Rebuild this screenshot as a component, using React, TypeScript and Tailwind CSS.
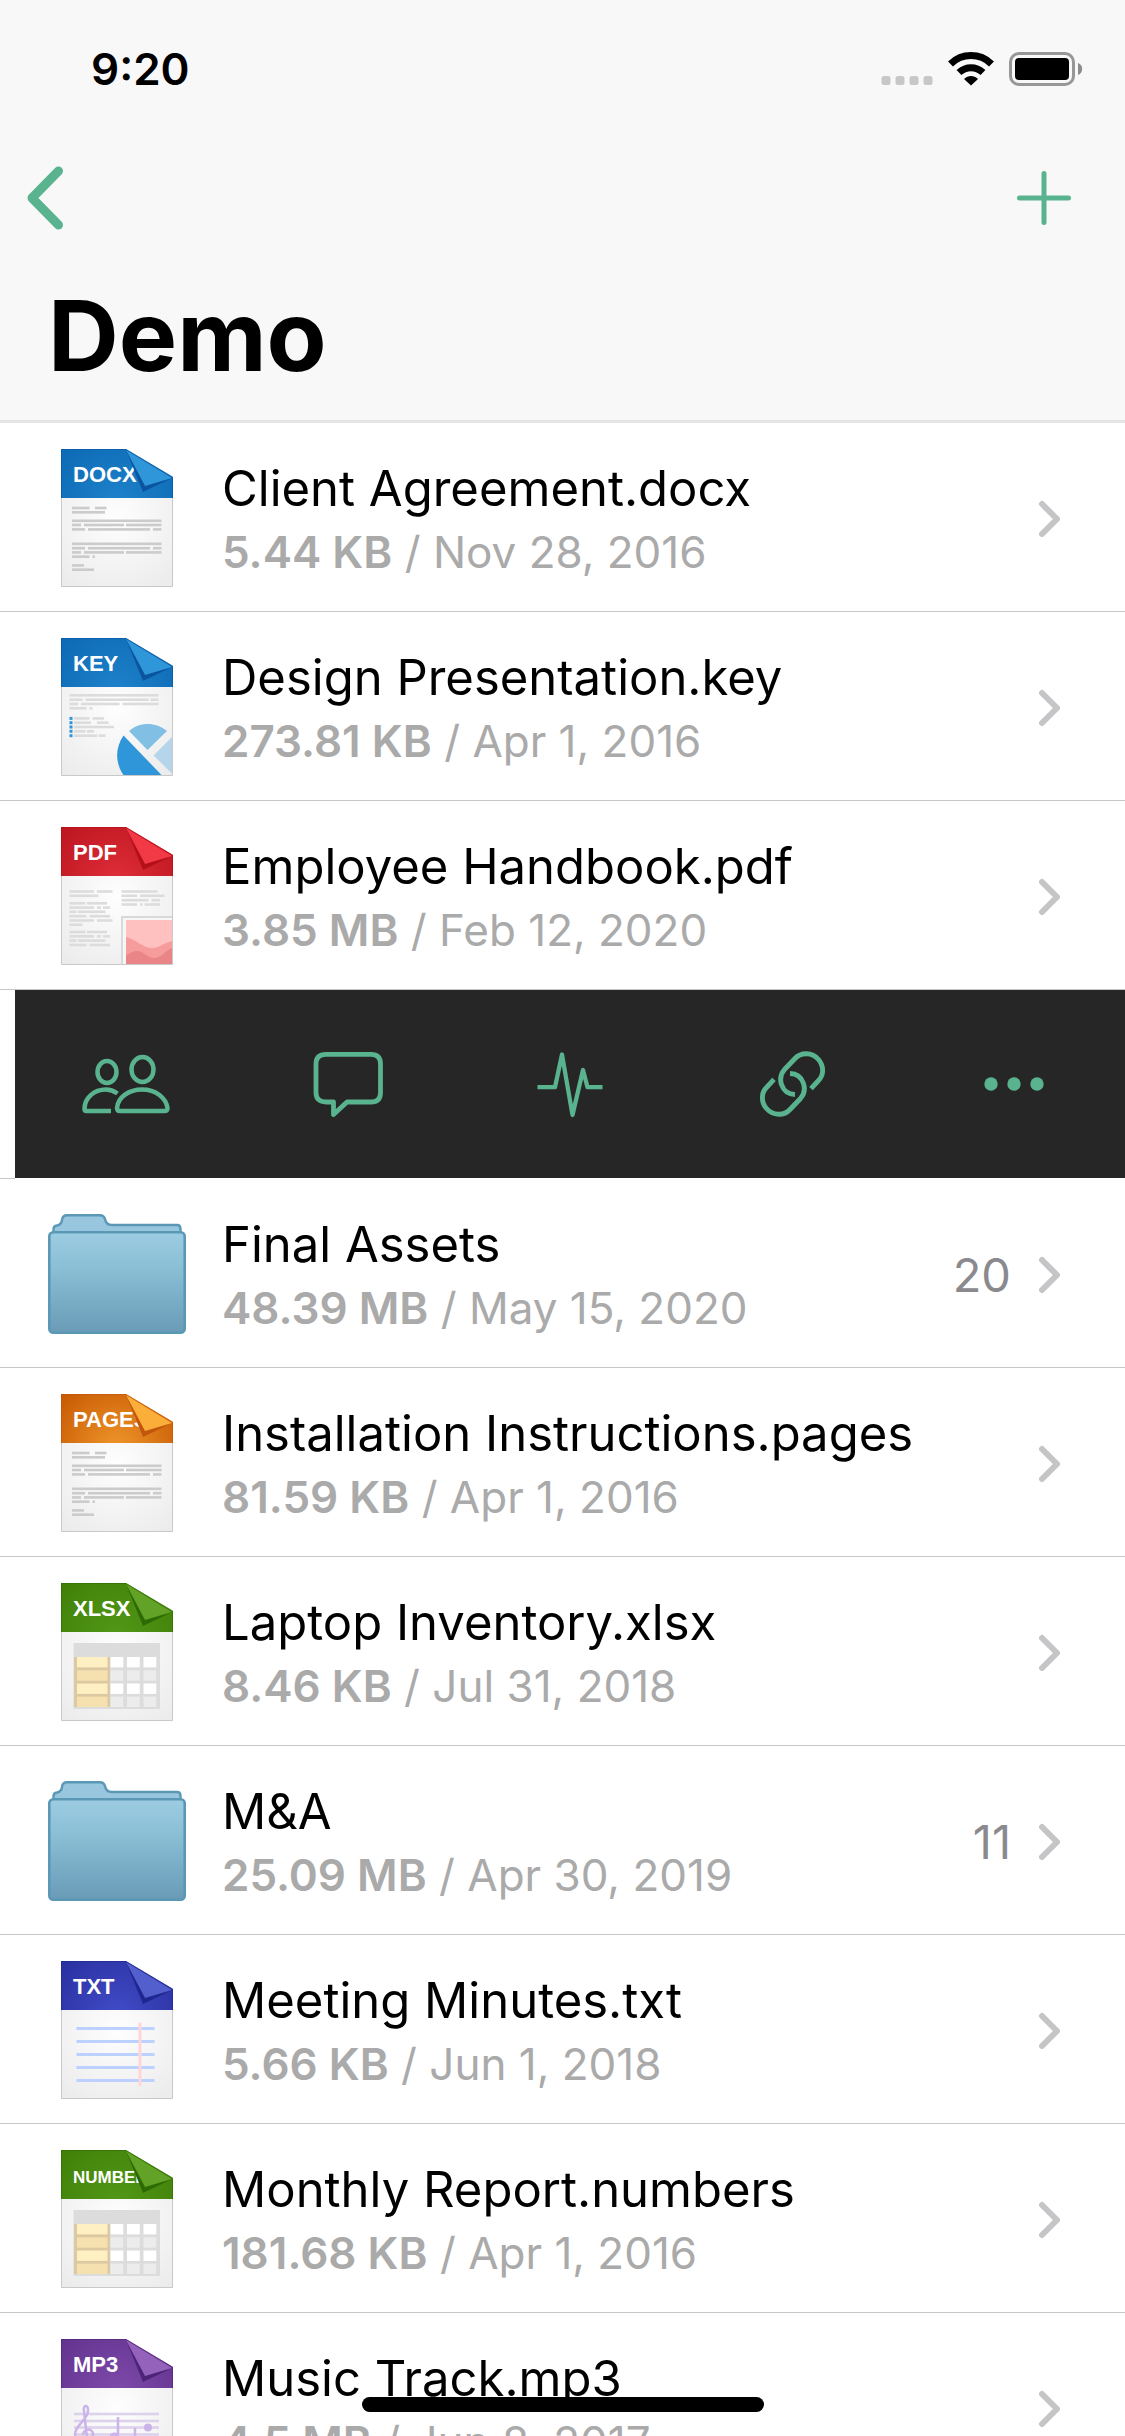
import type { ReactNode } from "react";

type Seg = [number, number, number];

type Palette = { id: string; edge: string; mid: string; fold: string; shade: string };

const BLUE: Palette = { id: "blue", edge: "#0d6ab4", mid: "#1f82cc", fold: "#2f96da", shade: "#0b559f" };
const RED: Palette = { id: "red", edge: "#bd1620", mid: "#df2e3a", fold: "#f23a46", shade: "#b5101a" };
const ORANGE: Palette = { id: "orange", edge: "#c85a04", mid: "#ee962a", fold: "#fbae3a", shade: "#c2560c" };
const GREEN: Palette = { id: "green", edge: "#418008", mid: "#529818", fold: "#62a226", shade: "#2e6a04" };
const INDIGO: Palette = { id: "indigo", edge: "#2a30a0", mid: "#414cc8", fold: "#525fcc", shade: "#1f2690" };
const PURPLE: Palette = { id: "purple", edge: "#63348f", mid: "#7f4aab", fold: "#9562bb", shade: "#4d2478" };

function Lines({ segs, color }: { segs: Seg[]; color: string }) {
  return (
    <g fill={color}>
      {segs.map(([x1, x2, y], i) => (
        <rect key={i} x={x1} y={y - 1.3} width={x2 - x1} height={2.6} />
      ))}
    </g>
  );
}

function Doc({ label, palette, size = 22, children }: { label: string; palette: Palette; size?: number; children: ReactNode }) {
  const id = `${palette.id}-${label}`;
  return (
    <svg viewBox="0 0 112 138" className="h-[138px] w-[112px]" aria-hidden="true">
      <defs>
        <radialGradient id={`${id}-head`} gradientUnits="userSpaceOnUse" cx="56" cy="54" r="75">
          <stop offset="0" stopColor={palette.mid} />
          <stop offset="1" stopColor={palette.edge} />
        </radialGradient>
        <radialGradient id={`${id}-body`} gradientUnits="userSpaceOnUse" cx="56" cy="70" r="85">
          <stop offset="0" stopColor="#fefefe" />
          <stop offset="1" stopColor="#ebebeb" />
        </radialGradient>
      </defs>
      <path d="M0 48H112V138H0Z" fill={`url(#${id}-body)`} />
      {children}
      <path d="M.5 49V137.5H111.5V49" fill="none" stroke="#c9c9c9" />
      <path d="M0 0H65L112 28V49H0Z" fill={`url(#${id}-head)`} />
      <path d="M.5 49V.5H65L111.5 28V49" fill="none" stroke={palette.shade} strokeOpacity=".6" />
      <text x="12" y="33" fill="#fff" fontFamily="Liberation Sans, sans-serif" fontWeight="700" fontSize={size}>
        {label}
      </text>
      <path d="M65 1L82 43L111 29Z" fill={palette.shade} />
      <path d="M65 1L84 37L111 29Z" fill={palette.fold} />
    </svg>
  );
}

const LETTER: Seg[] = [
  [11, 28.5, 59], [34, 45.5, 59], [11, 44, 63.3], [11, 100.5, 71.8],
  [11, 20, 76], [23, 63, 76], [65, 100.5, 76],
  [11, 24, 80.4], [27, 89, 80.4], [92, 100.5, 80.4],
  [11, 100.5, 94.8], [11, 24, 99.2], [27, 89, 99.2], [92, 100.5, 99.2],
  [11, 20, 103.4], [23, 63, 103.4], [65, 100.5, 103.4],
  [11, 28.5, 107.7], [31.5, 34, 107.7], [11, 23, 116.4], [11, 33, 120.7],
];

const SLIDE: Seg[] = [
  [8.5, 97.5, 57.3], [8.5, 21.5, 61.7], [24.5, 87.5, 61.7], [89.5, 97.5, 61.7],
  [8.5, 17, 66], [20, 58.5, 66], [61.5, 97.5, 66], [8.5, 25.5, 70.3], [28.5, 31.5, 70.3],
  [13, 28.5, 80.4], [31.5, 43, 80.4], [13, 30, 84.7], [36, 47.5, 84.7], [13, 53, 89],
  [13, 24.5, 93.3], [26, 33, 93.3], [13, 36, 97.7], [37.5, 44.5, 97.7],
];

const ARTICLE: Seg[] = [
  [8.5, 33, 64.5], [36, 51.5, 64.5], [8.5, 37.5, 68.8], [8.5, 24.5, 76.3], [26, 46, 76.3],
  [8.5, 33, 80.6], [36, 40, 80.6], [42, 49, 80.6], [8.5, 15.5, 84.8], [17, 44.5, 84.8],
  [8.5, 25.5, 89.2], [28.5, 49, 89.2], [8.5, 33, 93.5], [36, 51.5, 93.5], [8.5, 21.5, 97.8],
  [8.5, 24.5, 105], [26, 46, 105], [8.5, 33, 109.3], [36, 40, 109.3], [42, 49, 109.3],
  [8.5, 15.5, 113.6], [17, 44.5, 113.6], [8.5, 25.5, 118], [28.5, 49, 118],
  [60.5, 96.5, 64.5], [60.5, 76, 68.8], [79, 103.5, 68.8], [60.5, 87.5, 73.2], [90.5, 99, 73.2],
  [60.5, 76, 77.5], [79, 81.5, 77.5], [83.5, 99, 77.5],
];

const Letter = () => <Lines segs={LETTER} color="#cbcbcb" />;

const Slide = () => (
  <g>
    <Lines segs={SLIDE} color="#dcdcdc" />
    <g fill="#2f96da">
      {[80.4, 84.7, 89, 93.3, 97.7].map((y) => (
        <rect key={y} x="8.5" y={y - 1.5} width="3" height="3" />
      ))}
      <path d="M62.5 97.5L100.5 137H62.5C54 125 54 110 62.5 97.5Z" />
    </g>
    <path d="M68 93C78 83.500 95 83.500 106 93L86.500 112Z" fill="#82bfe4" />
    <path d="M92.500 117.500L111 99V135.500Z" fill="#b5d5ea" />
  </g>
);

const Article = () => (
  <g>
    <Lines segs={ARTICLE} color="#dcdcdc" />
    <path d="M60 89H111V138H60Z" fill="#d9d9d9" />
    <path d="M62 91H111V138H62Z" fill="#f6f6f6" />
    <path d="M65 93H111V138H65Z" fill="#ffc0c0" />
    <path d="M65 110C76 113 82 121 91 121C99 121 102 116 111 114V138H65Z" fill="#f79c9c" />
    <path d="M65 129C68 126 72 124 76 124C83 124 86 131 93 131C100 131 104 124 111 121V138H65Z" fill="#e98586" />
  </g>
);

const Sheet = () => (
  <g>
    <path d="M12.500 60H99V126H12.500Z" fill="#dcdcdc" />
    <path d="M13 74H49V124H13Z" fill="#dcc8a2" />
    {[74, 87.3, 100.5, 113.6].map((y, i) => (
      <g key={y}>
        <rect x="16" y={y} width="30.5" height="10.400" fill={i % 2 ? "#f5e0b0" : "#fef0c2"} />
        {[49.5, 66, 82.5].map((x) => (
          <rect key={x} x={x} y={y} width="12.800" height="10.400" fill={i % 2 ? "#ececec" : "#fff"} />
        ))}
      </g>
    ))}
  </g>
);

const Note = () => (
  <g>
    {[67.5, 80.5, 93.5, 106.5, 119.5].map((y) => (
      <rect key={y} x="15.5" y={y - 1.5} width="78" height="3" fill="#bcd1ff" />
    ))}
    <rect x="77.500" y="61.500" width="3" height="63.500" fill="#ffd6d8" />
  </g>
);

const Score = () => (
  <g>
    <g fill="#ddd2ec">
      {[75, 82, 88.5, 95.5, 102].map((y) => (
        <rect key={y} x="13" y={y - 1.3} width="85" height="2.600" />
      ))}
    </g>
    <g fill="none" stroke="#cbb4ea" strokeWidth="2.500">
      <path d="M27 108L23 72C22 66 27 65 27 71C28 80 14 86 14 95C14 104 32 104 32 95C32 89 22 89 22 96" />
      <path d="M57 78V96M74 89V106" />
    </g>
    <g fill="#cbb4ea">
      <ellipse cx="53.500" cy="97" rx="4.500" ry="3.500" />
      <circle cx="87" cy="88.500" r="4" />
    </g>
  </g>
);

function Folder() {
  return (
    <svg viewBox="0 0 138 120" className="h-[120px] w-[138px]" aria-hidden="true">
      <defs>
        <linearGradient id="folder-front" x1="0" y1="0" x2="0" y2="1">
          <stop offset="0" stopColor="#9dcce2" />
          <stop offset=".35" stopColor="#8abfd6" />
          <stop offset="1" stopColor="#699bb6" />
        </linearGradient>
      </defs>
      <path
        d="M5.500 20V15Q5.500 12 9 11.500Q13.500 10.500 14 6Q14.500 1.200 19 1.200H52Q56 1.200 57 5Q58 11 64 11H129Q132.500 11 132.500 15V20Z"
        fill="#97c6de"
        stroke="#5b98b5"
        strokeWidth="2.400"
      />
      <rect x="1.300" y="18.300" width="135.400" height="100.400" rx="4" fill="url(#folder-front)" stroke="#5b98b5" strokeWidth="2.600" />
    </svg>
  );
}

function Chevron() {
  return (
    <svg viewBox="0 0 22 38" className="h-[38px] w-[22px] shrink-0" fill="none" stroke="#c5c5c7" strokeWidth="6" strokeLinecap="round" strokeLinejoin="round" aria-hidden="true">
      <path d="M4 5L19 20L4 35" />
    </svg>
  );
}

type Item = { name: string; size: string; date: string; count?: number; icon: ReactNode };

const before: Item[] = [
  { name: "Client Agreement.docx", size: "5.44 KB", date: "Nov 28, 2016", icon: <Doc label="DOCX" palette={BLUE}><Letter /></Doc> },
  { name: "Design Presentation.key", size: "273.81 KB", date: "Apr 1, 2016", icon: <Doc label="KEY" palette={BLUE}><Slide /></Doc> },
  { name: "Employee Handbook.pdf", size: "3.85 MB", date: "Feb 12, 2020", icon: <Doc label="PDF" palette={RED}><Article /></Doc> },
];

const after: Item[] = [
  { name: "Final Assets", size: "48.39 MB", date: "May 15, 2020", count: 20, icon: <Folder /> },
  { name: "Installation Instructions.pages", size: "81.59 KB", date: "Apr 1, 2016", icon: <Doc label="PAGES" palette={ORANGE}><Letter /></Doc> },
  { name: "Laptop Inventory.xlsx", size: "8.46 KB", date: "Jul 31, 2018", icon: <Doc label="XLSX" palette={GREEN}><Sheet /></Doc> },
  { name: "M&A", size: "25.09 MB", date: "Apr 30, 2019", count: 11, icon: <Folder /> },
  { name: "Meeting Minutes.txt", size: "5.66 KB", date: "Jun 1, 2018", icon: <Doc label="TXT" palette={INDIGO}><Note /></Doc> },
  { name: "Monthly Report.numbers", size: "181.68 KB", date: "Apr 1, 2016", icon: <Doc label="NUMBER" palette={GREEN} size={17}><Sheet /></Doc> },
  { name: "Music Track.mp3", size: "4.5 MB", date: "Jun 8, 2017", icon: <Doc label="MP3" palette={PURPLE}><Score /></Doc> },
];

function Row({ item }: { item: Item }) {
  return (
    <li className="border-b border-[#c6c6c8]">
      <a href="#" className="flex h-[188px] items-center pt-0.5 pr-[65px] pl-12">
        <span className="flex h-[138px] w-[138px] shrink-0 items-center justify-center">{item.icon}</span>
        <span className="ml-9 flex min-w-0 flex-1 flex-col pt-1.5 whitespace-nowrap">
          <span className="text-[49px] leading-[62px] text-black">{item.name}</span>
          <span className="text-[44px] leading-[64px] text-[#aaaaaa]">
            <strong className="font-semibold">{item.size}</strong> / {item.date}
          </span>
        </span>
        {item.count !== undefined && <span className="mr-[27px] pt-0.5 text-[47px] leading-[62px] text-[#8a8a8e]">{item.count}</span>}
        <Chevron />
      </a>
    </li>
  );
}

function Action({ label, children }: { label: string; children: ReactNode }) {
  return (
    <button type="button" aria-label={label} className="flex items-center justify-center">
      {children}
    </button>
  );
}

const ACCENT = "#5ab38f";

function Actions() {
  return (
    <li className="flex h-[189px]">
      <div className="w-[15px] border-b border-[#c6c6c8]" />
      <div className="mb-px grid flex-1 grid-cols-5 bg-[#262626]">
        <Action label="Members">
          <svg viewBox="0 0 88 68" className="h-[68px] w-[88px]" fill="none" stroke={ACCENT} strokeWidth="4.500" strokeLinejoin="round">
            <ellipse cx="25" cy="22" rx="9.500" ry="11" />
            <ellipse cx="60.500" cy="19.500" rx="11" ry="12.500" />
            <path d="M35.500 43.500C32 41 28 39.500 24 39.500C12 39.500 2.500 48 2.500 59Q2.500 61 4.500 61H29" />
            <path d="M35 58C36 47 47 39.500 60 39.500C74 39.500 84 48 85.500 58Q85.500 61 82.500 61H38Q35 61 35 58Z" />
          </svg>
        </Action>
        <Action label="Comments">
          <svg viewBox="0 0 70 68" className="h-[68px] w-[70px]" fill="none" stroke={ACCENT} strokeWidth="4.800" strokeLinejoin="round">
            <path d="M13 4.400H58Q67.500 4.400 67.500 14V42.500Q67.500 52 58 52H34L20.500 64.500V52H13Q3 52 3 42.500V14Q3 4.400 13 4.400Z" />
          </svg>
        </Action>
        <Action label="Activity">
          <svg viewBox="0 0 66 68" className="h-[68px] w-[66px]" fill="none" stroke={ACCENT} strokeWidth="4.300" strokeLinejoin="round">
            <path d="M.5 37.200H18L25 4.500L35.500 65L46 20L50.500 37.200H65.500" />
          </svg>
        </Action>
        <Action label="Share link">
          <svg viewBox="0 0 66 68" className="h-[68px] w-[66px]" fill="none" stroke={ACCENT} strokeWidth="4.900">
            <path d="M15 29.300L7.500 37.500C2 43 2 52 7.500 58.500C14 66 25 66 31 59.500L41.500 48.500C49 40 45 24 31 23.500" />
            <path d="M52 38.700L59.500 30.500C65 25 65 16 59.500 9.500C53 2 42 2 36 8.500L25.500 19.500C18 28 22 44 36 44.500" />
          </svg>
        </Action>
        <Action label="More">
          <svg viewBox="0 0 60 14" className="h-[14px] w-[60px]" fill={ACCENT}>
            <circle cx="7" cy="7" r="6.700" />
            <circle cx="30" cy="7" r="6.700" />
            <circle cx="53" cy="7" r="6.700" />
          </svg>
        </Action>
      </div>
    </li>
  );
}

function StatusBar() {
  return (
    <div className="flex h-[138px] items-center justify-between pr-[42px] pl-[91px]">
      <span className="text-[44px] leading-[54px] font-semibold">9:20</span>
      <div className="flex items-center gap-[15px]">
        <svg viewBox="0 0 52 34" className="h-[34px] w-[52px]" fill="#c7c7c7" aria-hidden="true">
          {[0, 14, 28, 42].map((x) => (
            <rect key={x} x={x + 0.5} y="24" width="9" height="9" rx="2.500" />
          ))}
        </svg>
        <svg viewBox="0 0 46 34" className="h-[34px] w-[46px]" aria-hidden="true">
          <g fill="none" stroke="#000" strokeWidth="7">
            <path d="M2.500 12C14 .8 32 .8 43.500 12" />
            <path d="M11 20.500C18 14 28 14 35 20.500" />
          </g>
          <path d="M16 27C20 23 26 23 30 27L23 33.500Z" />
        </svg>
        <svg viewBox="0 0 74 34" className="h-[34px] w-[74px]" aria-hidden="true">
          <rect x="1.500" y="1.500" width="63" height="31" rx="8.500" fill="none" stroke="#979797" strokeWidth="3" />
          <rect x="6" y="6" width="54" height="22" rx="4" />
          <path d="M69 11C74.500 12.500 74.500 21.500 69 23Z" fill="#8c8c8c" />
        </svg>
      </div>
    </div>
  );
}

export default function App() {
  return (
    <div className="h-screen overflow-hidden bg-white font-['Inter','Liberation_Sans',sans-serif] text-black">
      <header className="border-b-[3px] border-[#e5e5e5] bg-[#f8f8f8]">
        <StatusBar />
        <nav className="flex h-[120px] items-center justify-between pr-[54px] pl-[27px]">
          <button type="button" aria-label="Back">
            <svg viewBox="0 0 36 64" className="h-16 w-9" fill="none" stroke={ACCENT} strokeWidth="9" strokeLinecap="round" strokeLinejoin="round">
              <path d="M31.500 5L5 32L31.500 59" />
            </svg>
          </button>
          <button type="button" aria-label="Add">
            <svg viewBox="0 0 54 54" className="h-[54px] w-[54px]" fill="none" stroke={ACCENT} strokeWidth="5" strokeLinecap="round">
              <path d="M27 2.500V51.500M2.500 27H51.500" />
            </svg>
          </button>
        </nav>
        <h1 className="h-[162px] px-12 pt-[18px] text-[98px] leading-[120px] font-bold">Demo</h1>
      </header>
      <main>
        <ul>
          {before.map((item) => (
            <Row key={item.name} item={item} />
          ))}
          <Actions />
          {after.map((item) => (
            <Row key={item.name} item={item} />
          ))}
        </ul>
      </main>
      <div className="fixed inset-x-0 bottom-6 flex justify-center">
        <div className="h-[15px] w-[402px] rounded-full bg-black" />
      </div>
    </div>
  );
}
